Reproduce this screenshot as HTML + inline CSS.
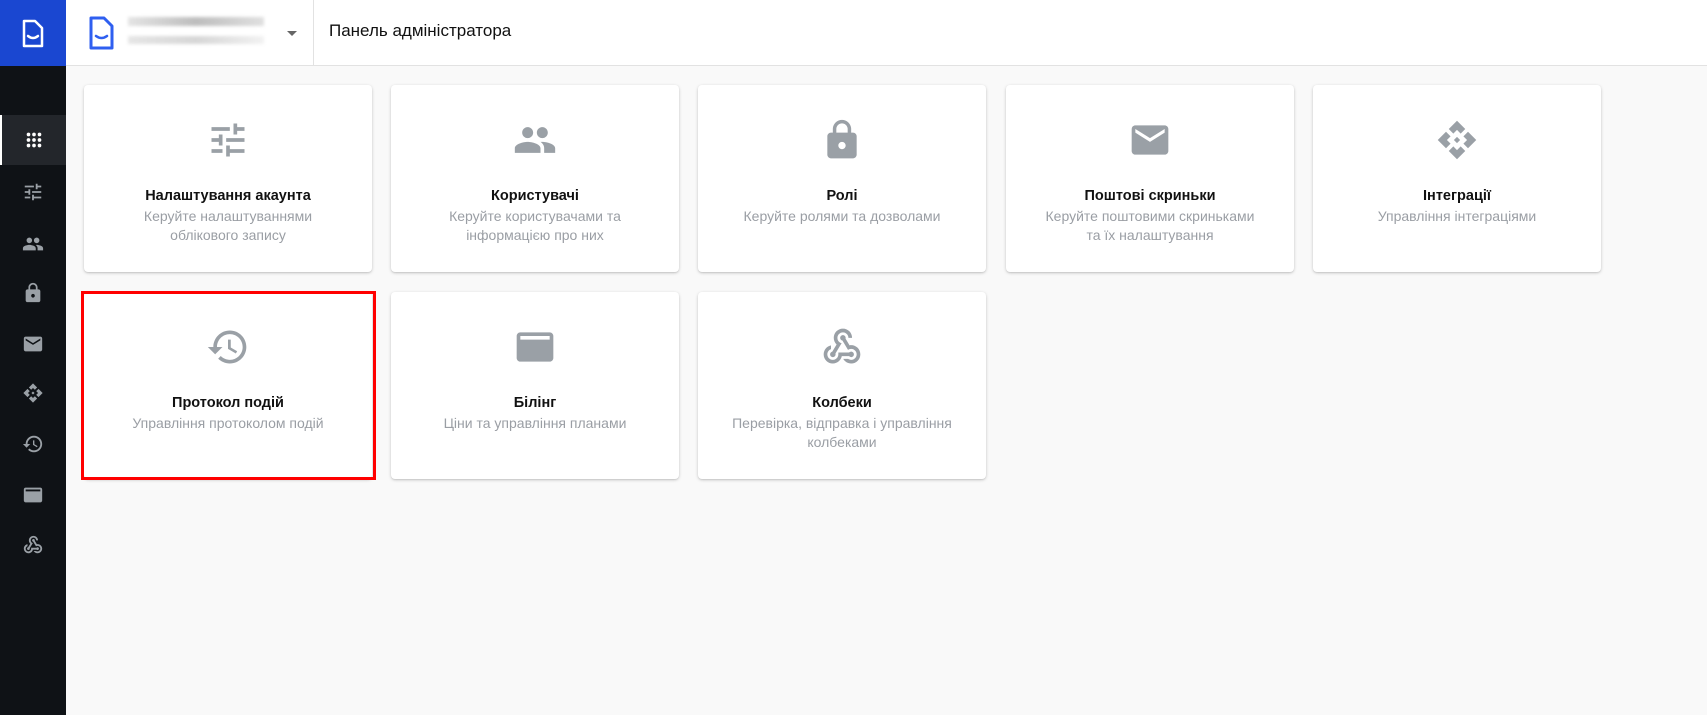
<!DOCTYPE html>
<html><head><meta charset="utf-8"><style>
*{box-sizing:border-box;margin:0;padding:0}
body{width:1707px;height:715px;overflow:hidden;background:#f9f9f9;font-family:"Liberation Sans",Roboto,sans-serif;position:relative}
.side{position:absolute;left:0;top:0;width:66px;height:715px;background:#0f1216}
.logo{position:absolute;left:0;top:0;width:66px;height:66px;background:#1a47d1}
.si{position:absolute;left:0;width:66px;height:50px;display:flex;align-items:center;justify-content:center}
.si svg{width:22px;height:22px;fill:#9aa0a6}
.si.act{background:#23262b;border-left:2px solid #fff}
.si.act svg{fill:#fff}
.head{position:absolute;left:66px;top:0;right:0;height:66px;background:#fff;border-bottom:1px solid #e2e2e2}
.card{position:absolute;width:288px;height:187px;background:#fff;border-radius:4px;box-shadow:0 1px 3px rgba(0,0,0,.2),0 1px 1px rgba(0,0,0,.06);text-align:center}
.card svg{position:absolute;left:122px;top:33px;width:44px;height:44px;fill:#9aa0a6}
.card h3{position:absolute;left:0;right:0;top:101px;font-size:14.5px;font-weight:bold;color:#111;line-height:20px}
.card p{position:absolute;left:0;right:0;top:122px;font-size:14px;color:#9a9ea4;line-height:19px;white-space:nowrap}
.red{position:absolute;left:81px;top:291px;width:295px;height:189px;border:3px solid #f00}
</style></head><body>
<div class="side">
 <div class="logo"><svg width="66" height="66" viewBox="0 0 66 66"><path d="M24 21h11l7 7v18h-18z" fill="none" stroke="#fff" stroke-width="2.5" stroke-linejoin="round"/><path d="M28 36q5 4 10 0" fill="none" stroke="#fff" stroke-width="2.5" stroke-linecap="round"/></svg></div>
 <div class="si act" style="top:115px"><svg viewBox="0 0 24 24"><circle cx="6" cy="6" r="2"/><circle cx="12" cy="6" r="2"/><circle cx="18" cy="6" r="2"/><circle cx="6" cy="12" r="2"/><circle cx="12" cy="12" r="2"/><circle cx="18" cy="12" r="2"/><circle cx="6" cy="18" r="2"/><circle cx="12" cy="18" r="2"/><circle cx="18" cy="18" r="2"/></svg></div>
 <div class="si" style="top:167px"><svg viewBox="0 0 24 24"><path d="M3 17v2h6v-2H3zM3 5v2h10V5H3zm10 16v-2h8v-2h-8v-2h-2v6h2zM7 9v2H3v2h4v2h2V9H7zm14 4v-2H11v2h10zm-6-4h2V7h4V5h-4V3h-2v6z"/></svg></div>
 <div class="si" style="top:219px"><svg viewBox="0 0 24 24"><path d="M16 11c1.66 0 2.99-1.34 2.99-3S17.66 5 16 5c-1.66 0-3 1.34-3 3s1.34 3 3 3zm-8 0c1.66 0 2.99-1.34 2.99-3S9.66 5 8 5C6.34 5 5 6.34 5 8s1.34 3 3 3zm0 2c-2.33 0-7 1.17-7 3.5V19h14v-2.5c0-2.33-4.67-3.5-7-3.5zm8 0c-.29 0-.62.02-.97.05 1.16.84 1.97 1.97 1.97 3.45V19h6v-2.5c0-2.33-4.67-3.5-7-3.5z"/></svg></div>
 <div class="si" style="top:268px"><svg viewBox="0 0 24 24"><path d="M18 8h-1V6c0-2.76-2.24-5-5-5S7 3.24 7 6v2H6c-1.1 0-2 .9-2 2v10c0 1.1.9 2 2 2h12c1.1 0 2-.9 2-2V10c0-1.1-.9-2-2-2zm-6 9c-1.1 0-2-.9-2-2s.9-2 2-2 2 .9 2 2-.9 2-2 2zm3.1-9H8.9V6c0-1.71 1.39-3.1 3.1-3.1 1.71 0 3.1 1.39 3.1 3.1v2z"/></svg></div>
 <div class="si" style="top:319px"><svg viewBox="0 0 24 24"><path d="M20 4H4c-1.1 0-1.99.9-1.99 2L2 18c0 1.1.9 2 2 2h16c1.1 0 2-.9 2-2V6c0-1.1-.9-2-2-2zm0 4l-8 5-8-5V6l8 5 8-5v2z"/></svg></div>
 <div class="si" style="top:368px"><svg viewBox="0 0 24 24"><path d="M12 1.5l4.5 4.5-2.5 2.5-2-2-2 2-2.5-2.5zM1.5 12l4.5-4.5 2.5 2.5-2 2 2 2-2.5 2.5zM22.5 12l-4.5-4.5-2.5 2.5 2 2-2 2 2.5 2.5zM12 22.5l4.5-4.5-2.5-2.5-2 2-2-2-2.5 2.5zM12 10.3l1.7 1.7-1.7 1.7-1.7-1.7z"/></svg></div>
 <div class="si" style="top:419px"><svg viewBox="0 0 24 24"><path d="M13 3c-4.97 0-9 4.03-9 9H1l3.89 3.89.07.14L9 12H6c0-3.87 3.13-7 7-7s7 3.13 7 7-3.13 7-7 7c-1.93 0-3.68-.79-4.94-2.06l-1.42 1.42C8.27 19.99 10.51 21 13 21c4.97 0 9-4.03 9-9s-4.03-9-9-9zm-1 5v5l4.28 2.54.72-1.21-3.5-2.08V8H12z"/></svg></div>
 <div class="si" style="top:470px"><svg viewBox="0 0 24 24"><path d="M20 4H4c-1.11 0-1.99.89-1.99 2L2 18c0 1.11.89 2 2 2h16c1.11 0 2-.89 2-2V6c0-1.11-.89-2-2-2zm0 4H4V6h16v2z"/></svg></div>
 <div class="si" style="top:520px"><svg viewBox="0 0 24 24"><path d="M10 15h5.88c.27-.31.67-.5 1.12-.5.83 0 1.5.67 1.5 1.5s-.67 1.5-1.5 1.5c-.44 0-.84-.19-1.12-.5H11.9c-.46 2.28-2.48 4-4.9 4-2.76 0-5-2.24-5-5 0-2.42 1.72-4.44 4-4.9v2.07c-1.16.41-2 1.53-2 2.83 0 1.65 1.35 3 3 3s3-1.35 3-3v-1zm2.5-11c1.65 0 3 1.35 3 3h2c0-2.76-2.24-5-5-5s-5 2.24-5 5c0 1.43.6 2.71 1.55 3.62l-2.35 3.9c-.68.14-1.2.75-1.2 1.48 0 .83.67 1.5 1.5 1.5s1.5-.67 1.5-1.5c0-.16-.02-.31-.07-.45l3.38-5.630C10.49 9.61 9.5 8.42 9.5 7c0-1.65 1.35-3 3-3zm4.5 9c-.64 0-1.23.2-1.72.54l-3.05-5.07C11.53 8.35 11 7.74 11 7c0-.83.67-1.5 1.5-1.5S14 6.17 14 7c0 .15-.02.29-.06.43l2.19 3.65c.28-.05.57-.08.87-.08 2.76 0 5 2.24 5 5s-2.24 5-5 5c-1.85 0-3.47-1.01-4.33-2.5h2.67c.48.32 1.05.5 1.66.5 1.65 0 3-1.35 3-3s-1.35-3-3-3z"/></svg></div>
</div>
<div class="head">
 <svg style="position:absolute;left:20px;top:15px" width="30" height="36" viewBox="0 0 30 36"><path d="M5 3h13l8 8v22H5z" fill="none" stroke="#2f5ff0" stroke-width="3" stroke-linejoin="round"/><path d="M10 21q5.5 4 11 0" fill="none" stroke="#2f5ff0" stroke-width="2.5" stroke-linecap="round"/></svg>
 <div style="position:absolute;left:62px;top:17px;width:136px;height:9px;background:linear-gradient(90deg,#e4e4e4,#bdbdbd 50%,#e0e0e0);filter:blur(1.5px)"></div>
 <div style="position:absolute;left:62px;top:36px;width:136px;height:8px;background:linear-gradient(90deg,#e6e6e6,#d6d6d6 50%,#f2f2f2);filter:blur(1.5px)"></div>
 <div style="position:absolute;left:221px;top:31px;width:0;height:0;border-left:5px solid transparent;border-right:5px solid transparent;border-top:5px solid #666"></div>
 <div style="position:absolute;left:247px;top:0;width:1px;height:66px;background:#e2e2e2"></div>
 <div style="position:absolute;left:263px;top:21px;font-size:17px;color:#111;font-weight:500">Панель адміністратора</div>
</div>

<div class="card" style="left:84px;top:85px"><svg viewBox="0 0 24 24"><path d="M3 17v2h6v-2H3zM3 5v2h10V5H3zm10 16v-2h8v-2h-8v-2h-2v6h2zM7 9v2H3v2h4v2h2V9H7zm14 4v-2H11v2h10zm-6-4h2V7h4V5h-4V3h-2v6z"/></svg><h3>Налаштування акаунта</h3><p>Керуйте налаштуваннями<br>облікового запису</p></div>
<div class="card" style="left:391px;top:85px"><svg viewBox="0 0 24 24"><path d="M16 11c1.66 0 2.99-1.34 2.99-3S17.66 5 16 5c-1.66 0-3 1.34-3 3s1.34 3 3 3zm-8 0c1.66 0 2.99-1.34 2.99-3S9.66 5 8 5C6.34 5 5 6.34 5 8s1.34 3 3 3zm0 2c-2.33 0-7 1.17-7 3.5V19h14v-2.5c0-2.33-4.67-3.5-7-3.5zm8 0c-.29 0-.62.02-.97.05 1.16.84 1.97 1.97 1.97 3.45V19h6v-2.5c0-2.33-4.67-3.5-7-3.5z"/></svg><h3>Користувачі</h3><p>Керуйте користувачами та<br>інформацією про них</p></div>
<div class="card" style="left:698px;top:85px"><svg viewBox="0 0 24 24"><path d="M18 8h-1V6c0-2.76-2.24-5-5-5S7 3.24 7 6v2H6c-1.1 0-2 .9-2 2v10c0 1.1.9 2 2 2h12c1.1 0 2-.9 2-2V10c0-1.1-.9-2-2-2zm-6 9c-1.1 0-2-.9-2-2s.9-2 2-2 2 .9 2 2-.9 2-2 2zm3.1-9H8.9V6c0-1.71 1.39-3.1 3.1-3.1 1.71 0 3.1 1.39 3.1 3.1v2z"/></svg><h3>Ролі</h3><p>Керуйте ролями та дозволами</p></div>
<div class="card" style="left:1006px;top:85px"><svg viewBox="0 0 24 24"><path d="M20 4H4c-1.1 0-1.99.9-1.99 2L2 18c0 1.1.9 2 2 2h16c1.1 0 2-.9 2-2V6c0-1.1-.9-2-2-2zm0 4l-8 5-8-5V6l8 5 8-5v2z"/></svg><h3>Поштові скриньки</h3><p>Керуйте поштовими скриньками<br>та їх налаштування</p></div>
<div class="card" style="left:1313px;top:85px"><svg viewBox="0 0 24 24"><path d="M12 1.5l4.5 4.5-2.5 2.5-2-2-2 2-2.5-2.5zM1.5 12l4.5-4.5 2.5 2.5-2 2 2 2-2.5 2.5zM22.5 12l-4.5-4.5-2.5 2.5 2 2-2 2 2.5 2.5zM12 22.5l4.5-4.5-2.5-2.5-2 2-2-2-2.5 2.5zM12 10.3l1.7 1.7-1.7 1.7-1.7-1.7z"/></svg><h3>Інтеграції</h3><p>Управління інтеграціями</p></div>

<div class="card" style="left:84px;top:292px"><svg viewBox="0 0 24 24"><path d="M13 3c-4.97 0-9 4.03-9 9H1l3.89 3.89.07.14L9 12H6c0-3.87 3.13-7 7-7s7 3.13 7 7-3.13 7-7 7c-1.93 0-3.68-.79-4.94-2.06l-1.42 1.42C8.27 19.99 10.51 21 13 21c4.97 0 9-4.03 9-9s-4.03-9-9-9zm-1 5v5l4.28 2.54.72-1.21-3.5-2.08V8H12z"/></svg><h3>Протокол подій</h3><p>Управління протоколом подій</p></div>
<div class="red"></div>
<div class="card" style="left:391px;top:292px"><svg viewBox="0 0 24 24"><path d="M20 4H4c-1.11 0-1.99.89-1.99 2L2 18c0 1.11.89 2 2 2h16c1.11 0 2-.89 2-2V6c0-1.11-.89-2-2-2zm0 4H4V6h16v2z"/></svg><h3>Білінг</h3><p>Ціни та управління планами</p></div>
<div class="card" style="left:698px;top:292px"><svg viewBox="0 0 24 24"><path d="M10 15h5.88c.27-.31.67-.5 1.12-.5.83 0 1.5.67 1.5 1.5s-.67 1.5-1.5 1.5c-.44 0-.84-.19-1.12-.5H11.9c-.46 2.28-2.48 4-4.9 4-2.76 0-5-2.24-5-5 0-2.42 1.72-4.44 4-4.9v2.07c-1.16.41-2 1.53-2 2.83 0 1.65 1.35 3 3 3s3-1.35 3-3v-1zm2.5-11c1.65 0 3 1.35 3 3h2c0-2.76-2.24-5-5-5s-5 2.24-5 5c0 1.43.6 2.71 1.55 3.62l-2.35 3.9c-.68.14-1.2.75-1.2 1.48 0 .83.67 1.5 1.5 1.5s1.5-.67 1.5-1.5c0-.16-.02-.31-.07-.45l3.38-5.63C10.49 9.61 9.5 8.42 9.5 7c0-1.65 1.35-3 3-3zm4.5 9c-.64 0-1.23.2-1.72.54l-3.05-5.07C11.53 8.35 11 7.74 11 7c0-.83.67-1.5 1.5-1.5S14 6.17 14 7c0 .15-.02.29-.06.43l2.19 3.65c.28-.05.57-.08.87-.08 2.76 0 5 2.24 5 5s-2.24 5-5 5c-1.85 0-3.470-1.01-4.33-2.5h2.67c.48.32 1.05.5 1.66.5 1.65 0 3-1.35 3-3s-1.35-3-3-3z"/></svg><h3>Колбеки</h3><p>Перевірка, відправка і управління<br>колбеками</p></div>
</body></html>
